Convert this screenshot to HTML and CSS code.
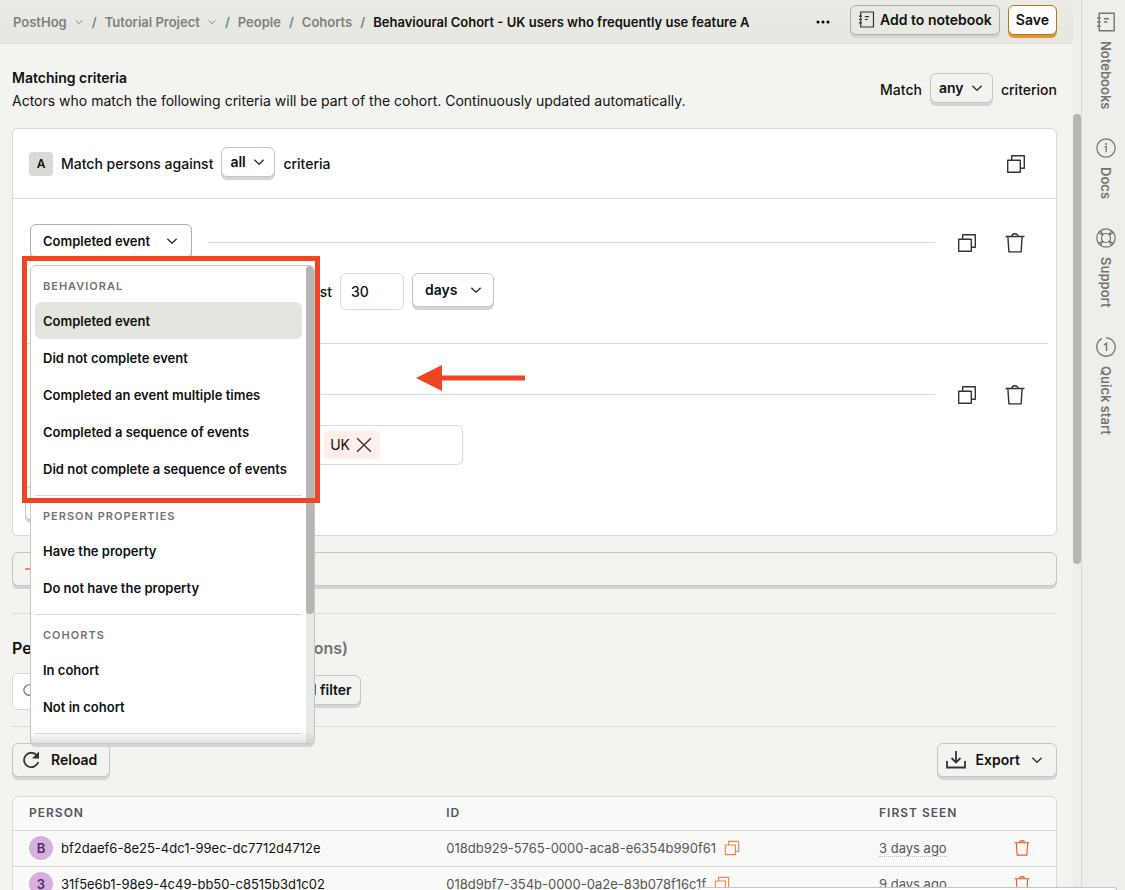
FILE: index.html
```html
<!DOCTYPE html>
<html lang="en">
<head>
<meta charset="utf-8">
<title>Behavioural Cohort</title>
<link rel="stylesheet" href="styles.css">
</head>
<body>
<svg class="sprite" aria-hidden="true">
  <symbol id="chev" viewBox="0 0 12 12"><path d="M2 4l4 4 4-4" fill="none" stroke="currentColor" stroke-width="1.2"/></symbol>
  <symbol id="copy" viewBox="0 0 20 20"><path d="M1.7 6.2h12.6v12.1H1.7zM5.7 6V1.7h12.6v12.6h-3.8" fill="none" stroke="currentColor" stroke-width="1.4" stroke-linejoin="round"/></symbol>
  <symbol id="trash" viewBox="0 0 20 20"><path d="M0.5 3.5h19M2.9 3.7l1 15.2h12.2l1-15.2M6.7 3.3c.3-1.5 1.5-2.5 3.3-2.5s3 1 3.3 2.5" fill="none" stroke="currentColor" stroke-width="1.4" stroke-linejoin="round"/></symbol>
  <symbol id="notebook" viewBox="0 0 20 20"><path d="M3.2 1.2h15v17.6h-15zM1 6h3.6M1 10h3.6M1 14h3.6M8 6.7h5M8 10h3.5" fill="none" stroke="currentColor" stroke-width="1.4" stroke-linejoin="round"/></symbol>
</svg>
<div class="app">
  <div class="scene">
    <header class="topbar">
      <nav class="crumbs" aria-label="Breadcrumb">
        <a href="#" class="crumb">PostHog <svg class="chev-s"><use href="#chev"/></svg></a><span class="slash">/</span>
        <a href="#" class="crumb">Tutorial Project <svg class="chev-s"><use href="#chev"/></svg></a><span class="slash">/</span>
        <a href="#" class="crumb">People</a><span class="slash">/</span>
        <a href="#" class="crumb">Cohorts</a><span class="slash">/</span>
        <span class="crumb current">Behavioural Cohort - UK users who frequently use feature A</span>
      </nav>
      <div class="actions">
        <button class="icon-btn" aria-label="More"><svg class="dots" viewBox="0 0 14 4"><circle cx="2" cy="2" r="1.5"/><circle cx="7" cy="2" r="1.5"/><circle cx="12" cy="2" r="1.5"/></svg></button>
        <button class="btn small notebook"><svg class="ico-m"><use href="#notebook"/></svg>Add to notebook</button>
        <button class="btn small save">Save</button>
      </div>
    </header>

    <main class="content">
      <section class="intro">
        <div>
          <h2 class="title">Matching criteria</h2>
          <p class="text">Actors who match the following criteria will be part of the cohort. Continuously updated automatically.</p>
        </div>
        <div class="inline">
          <label for="any">Match</label>
          <span class="picker"><select id="any" class="btn small"><option>any</option></select><svg class="chev"><use href="#chev"/></svg></span>
          <span>criterion</span>
        </div>
      </section>

      <section class="card">
        <div class="card-head">
          <span class="badge">A</span>
          <label for="all">Match persons against</label>
          <span class="picker"><select id="all" class="btn small white"><option>all</option></select><svg class="chev"><use href="#chev"/></svg></span>
          <span>criteria</span>
          <button class="icon-btn push" aria-label="Duplicate group"><svg class="ico"><use href="#copy"/></svg></button>
        </div>

        <div class="criterion">
          <div class="crit-row">
            <div class="anchor">
              <button class="btn white open" aria-haspopup="true" aria-expanded="true">Completed event <svg class="chev"><use href="#chev"/></svg></button>
              <div class="menu">
                <div class="menu-list">
                  <h5 class="menu-title">Behavioral</h5>
                  <button class="item selected">Completed event</button>
                  <button class="item">Did not complete event</button>
                  <button class="item">Completed an event multiple times</button>
                  <button class="item">Completed a sequence of events</button>
                  <button class="item">Did not complete a sequence of events</button>
                  <hr class="menu-line">
                  <h5 class="menu-title">Person properties</h5>
                  <button class="item">Have the property</button>
                  <button class="item">Do not have the property</button>
                  <hr class="menu-line">
                  <h5 class="menu-title">Cohorts</h5>
                  <button class="item">In cohort</button>
                  <button class="item">Not in cohort</button>
                  <hr class="menu-line">
                </div>
                <div class="menu-track"><div class="menu-thumb"></div></div>
              </div>
            </div>
            <span class="rule"></span>
            <button class="icon-btn" aria-label="Duplicate"><svg class="ico"><use href="#copy"/></svg></button>
            <button class="icon-btn" aria-label="Delete"><svg class="ico"><use href="#trash"/></svg></button>
          </div>
          <div class="fields">
            <label class="lead" for="num">in the last</label>
            <input id="num" class="num" type="text" value="30">
            <span class="picker wide"><select class="btn white" aria-label="Interval"><option>days</option></select><svg class="chev"><use href="#chev"/></svg></span>
          </div>
        </div>

        <div class="criterion second">
          <div class="crit-row">
            <span class="rule"></span>
            <button class="icon-btn" aria-label="Duplicate"><svg class="ico"><use href="#copy"/></svg></button>
            <button class="icon-btn" aria-label="Delete"><svg class="ico"><use href="#trash"/></svg></button>
          </div>
          <div class="fields">
            <div class="tags"><span class="tag">UK <button class="icon-btn" aria-label="Remove UK"><svg class="cross" viewBox="0 0 14 14"><path d="M1 1l12 12M13 1L1 13" fill="none" stroke="currentColor" stroke-width="1.2"/></svg></button></span></div>
          </div>
        </div>
        <button class="btn white add-crit" aria-label="Add criteria"></button>
      </section>

      <button class="btn add-group" aria-label="Add criteria group"><svg class="plus" viewBox="0 0 14 14"><path d="M0 7h14M7 0v14" fill="none" stroke="currentColor" stroke-width="1.8"/></svg></button>

      <hr class="line">
      <h3 class="persons"><span>Persons</span><span class="muted">(2 persons)</span></h3>
      <div class="filters">
        <div class="search"><svg class="ico-m" viewBox="0 0 18 18"><path d="M12.5 12.5L17 17M13 7.5a5.5 5.5 0 1 1-11 0 5.500 5.500 0 0 1 11 0" fill="none" stroke="currentColor" stroke-width="1.4"/></svg><input type="search" aria-label="Search persons"></div>
        <button class="btn small filter">Add filter</button>
      </div>
      <hr class="line">
      <div class="tools">
        <button class="btn"><svg class="ico-l" viewBox="0 0 20 20"><path d="M16.3 6A7.2 7.2 0 1 0 17.2 12" fill="none" stroke="currentColor" stroke-width="1.8"/><path d="M18 1.5v7h-7z" fill="currentColor"/></svg>Reload</button>
        <button class="btn export"><svg class="ico-l" viewBox="0 0 20 20"><path d="M1 11v6.500h18V11M10 1v11M5.500 8L10 12.500 14.500 8" fill="none" stroke="currentColor" stroke-width="1.8"/></svg>Export <svg class="chev"><use href="#chev"/></svg></button>
      </div>

      <div class="table-box">
        <table class="table">
          <colgroup><col class="c-person"><col><col class="c-seen"><col class="c-del"></colgroup>
          <thead><tr><th>Person</th><th>ID</th><th>First seen</th><th></th></tr></thead>
          <tbody>
            <tr>
              <td><a href="#" class="person"><span class="avatar">B</span>bf2daef6-8e25-4dc1-99ec-dc7712d4712e</a></td>
              <td><span class="id">018db929-5765-0000-aca8-e6354b990f61 <button class="icon-btn orange" aria-label="Copy"><svg class="ico-s"><use href="#copy"/></svg></button></span></td>
              <td><span class="ago">3 days ago</span></td>
              <td><button class="icon-btn orange strong" aria-label="Delete"><svg class="ico-s"><use href="#trash"/></svg></button></td>
            </tr>
            <tr>
              <td><a href="#" class="person"><span class="avatar">3</span>31f5e6b1-98e9-4c49-bb50-c8515b3d1c02</a></td>
              <td><span class="id">018d9bf7-354b-0000-0a2e-83b078f16c1f <button class="icon-btn orange" aria-label="Copy"><svg class="ico-s"><use href="#copy"/></svg></button></span></td>
              <td><span class="ago">9 days ago</span></td>
              <td><button class="icon-btn orange strong" aria-label="Delete"><svg class="ico-s"><use href="#trash"/></svg></button></td>
            </tr>
          </tbody>
        </table>
      </div>
    </main>
  </div>

  <div class="track"><div class="thumb"></div></div>

  <aside class="side">
    <button class="tab"><svg class="ico-l"><use href="#notebook"/></svg><span class="vert">Notebooks</span></button>
    <button class="tab"><svg class="ico-l" viewBox="0 0 20 20"><circle cx="10" cy="10" r="9.2" fill="none" stroke="currentColor" stroke-width="1.2"/><path d="M8.500 8.700h1.700v5.600" fill="none" stroke="currentColor" stroke-width="1.3"/><circle cx="10" cy="6" r="1" fill="currentColor"/></svg><span class="vert">Docs</span></button>
    <button class="tab"><svg class="ico-l" viewBox="0 0 20 20"><g fill="none" stroke="currentColor" stroke-width="1.2"><circle cx="10" cy="10" r="9.2"/><circle cx="10" cy="10" r="4.5"/><path d="M2.800 4.300l4 3.200M4.300 2.800l3.200 4M17.200 4.300l-4 3.200M15.700 2.800l-3.200 4M2.800 15.700l4-3.200M4.300 17.200l3.200-4M17.200 15.700l-4-3.200M15.700 17.200l-3.200-4"/></g></svg><span class="vert">Support</span></button>
    <button class="tab"><svg class="ico-l" viewBox="0 0 20 20"><path d="M10 .8A9.200 9.200 0 1 1 6 1.700" fill="none" stroke="currentColor" stroke-width="1.3"/><path d="M8 8l2.500-1.700V14" fill="none" stroke="currentColor" stroke-width="1.4"/></svg><span class="vert">Quick start</span></button>
  </aside>

  <div class="frame"></div>
  <svg class="arrow" viewBox="0 0 110 26"><path d="M0 13L26 0v10.500h83v5H26V26z" fill="#f04423"/></svg>
  <div class="sheet"></div>
</div>
</body>
</html>
```
FILE: styles.css
```css
* { box-sizing: border-box; }
body { margin: 0; font-family: Inter, "Liberation Sans", sans-serif; font-size: 14px; line-height: 20px; color: #111; background: #f3f4ef; }
h2, h3, h5, p, hr { margin: 0; }
hr { border: 0; }
a { color: inherit; text-decoration: none; }
button, input, select { font: inherit; color: inherit; margin: 0; }
svg { display: block; flex: none; }
.sprite { position: absolute; width: 0; height: 0; }

.app { position: relative; display: flex; height: 100vh; overflow: hidden; }
.scene { flex: 1; min-width: 0; }

.ico { width: 20px; height: 20px; }
.ico-l { width: 20px; height: 20px; }
.ico-m { width: 17px; height: 17px; }
.ico-s { width: 16px; height: 16px; }
.chev { width: 14px; height: 14px; }
.chev-s { width: 10px; height: 10px; }
.dots { width: 14px; height: 4px; }
.cross { width: 16px; height: 16px; }
.icon-btn { border: 0; background: none; padding: 0; color: #333; display: flex; }

.btn { appearance: none; display: flex; align-items: center; height: 34px; padding: 0 12px; gap: 10px; border: 1px solid #c5c5c5; border-radius: 6px; background: #f3f4ef; box-shadow: 0 3px 0 #d6d3d4; font-size: 14px; font-weight: 600; }
.btn svg { color: #333; }
.btn .plus { width: 16px; height: 16px; color: #f0854f; }
.btn.small { height: 30px; padding: 0 8px; }
.btn.white { background: #fff; }

.topbar { display: flex; align-items: center; justify-content: space-between; height: 44px; padding: 0 16px 0 13px; background: linear-gradient(#eaebe6, #e5e7e0); border-bottom: 1px solid #dedfd9; }
.crumbs { display: flex; align-items: center; gap: 8px; font-size: 13px; font-weight: 600; color: #7f807b; }
.crumb { display: flex; align-items: center; gap: 7px; white-space: nowrap; }
.crumb.current { color: #111; }
.actions { display: flex; align-items: center; gap: 8px; padding-bottom: 4px; }
.actions > .icon-btn { margin: 4px 12px 0 0; }
.topbar .btn { white-space: nowrap; gap: 6px; }
.topbar .notebook { padding: 0 7px; gap: 5px; background: #e8e9e3; border-color: #aeaeaa; }
.topbar .save { padding: 0 7px; background: #fff; border-color: #b17816; box-shadow: 0 3px 0 #dc9a35; }

.content { padding: 24px 16px 0 12px; }
.intro { display: flex; justify-content: space-between; align-items: center; padding-bottom: 17px; }
.title { font-size: 14px; font-weight: 600; line-height: 20px; margin-bottom: 3px; }
.inline { display: flex; align-items: center; gap: 8px; font-weight: 500; }
.picker { display: grid; align-items: center; padding-bottom: 3px; }
.picker > * { grid-area: 1 / 1; }
.picker .btn { padding-right: 28px; }
.picker.wide .btn { padding-right: 35px; }
.picker > svg { justify-self: end; margin-right: 9px; pointer-events: none; color: #333; }
.picker.wide > svg { margin-right: 11px; }

.card { display: flex; flex-direction: column; align-items: flex-start; border: 1px solid #d9dad3; border-radius: 6px; background: #fff; padding-bottom: 15px; }
.card > div { align-self: stretch; }
.card-head { display: flex; align-items: center; gap: 8px; height: 70px; padding: 0 30px 0 16px; border-bottom: 1px solid #d9dad3; font-weight: 500; }
.badge { width: 24px; height: 24px; border-radius: 4px; background: #d9dad3; font-size: 12px; font-weight: 600; line-height: 24px; text-align: center; }
.push { margin-left: auto; }
.criterion { margin: 0 8px; padding: 25px 23px 0 9px; height: 145px; border-bottom: 1px solid #d9dad3; }
.criterion.second { height: 142px; border-bottom: 0; padding-top: 32px; }
.crit-row { display: flex; align-items: center; height: 37px; }
.anchor { position: relative; padding-bottom: 3px; }
.anchor > .btn { border-color: #aeaeaa; white-space: nowrap; font-size: 13px; gap: 15px; }
.rule { flex: 1; height: 1px; background: #d9dad3; margin: 0 22px 0 16px; }
.crit-row > .icon-btn + .icon-btn { margin-left: 28px; }
.fields { display: flex; align-items: center; gap: 8px; margin-top: 12px; font-weight: 500; }
.lead { width: 302px; text-align: right; }
.num { width: 64px; height: 37px; padding: 0 10px; border: 1px solid #d9dad3; border-radius: 6px; background: #fff; }
.tags { width: 433px; height: 40px; padding: 5px 82px; border: 1px solid #d9dad3; border-radius: 6px; display: flex; justify-content: flex-end; }
.tag { display: flex; align-items: center; gap: 6px; height: 28px; padding: 0 8px 0 6px; border-radius: 4px; background: #fdeeea; font-weight: 400; }
.add-crit { width: 120px; margin-left: 12px; }

.add-group { width: 100%; margin: 16px 0 27px; }
.line { height: 1px; background: #d9dad3; }
.persons { display: flex; justify-content: space-between; width: 336px; margin: 22px 0 13px; font-size: 16px; font-weight: 600; line-height: 24px; }
.muted { color: #73736f; }
.filters { display: flex; align-items: center; gap: 8px; padding-bottom: 16px; }
.filter { margin-bottom: 3px; }
.search { display: flex; align-items: center; width: 260px; height: 37px; padding: 0 9px; border: 1px solid #d9dad3; border-radius: 6px; background: #fff; color: #777; }
.search input { flex: 1; min-width: 0; border: 0; outline: 0; background: none; }
.tools { display: flex; justify-content: space-between; padding: 16px 0 19px; }
.tools .btn { padding: 0 12px 0 8px; }

.table-box { border: 1px solid #d9dad3; border-radius: 6px 6px 0 0; background: #f9faf7; }
.table { width: 100%; table-layout: fixed; border-collapse: collapse; }
.c-person { width: 40%; }
.c-seen { width: 135px; }
.c-del { width: 58px; }
.table th { height: 33px; padding: 0 16px; text-align: left; font-size: 12px; font-weight: 600; letter-spacing: 1px; text-transform: uppercase; color: #555; border-bottom: 1px solid #d9dad3; }
.table td { height: 36px; padding: 0 16px; font-size: 13px; border-bottom: 1px solid #d9dad3; white-space: nowrap; }
.person { display: flex; align-items: center; gap: 8px; }
.avatar { width: 24px; height: 24px; border-radius: 50%; background: #d6b1e0; color: #57286b; font-weight: 600; line-height: 24px; text-align: center; }
.id { display: flex; align-items: center; gap: 8px; color: #555; }
.ago { color: #555; border-bottom: 1px dotted #bbb; }
.icon-btn.orange { color: #f0854f; }
.icon-btn.strong { color: #eb5a28; }

.track { width: 8px; background: #eeefea; padding-top: 114px; }
.thumb { height: 450px; border-radius: 4px; background: #b5b6b1; }
.side { width: 44px; flex: none; display: flex; flex-direction: column; align-items: center; gap: 29px; padding: 12px 0 0 5px; border-left: 1px solid #d9dad3; background: #eeefea; }
.tab { display: flex; flex-direction: column; align-items: center; gap: 9px; padding: 0; border: 0; background: none; color: #73736f; font-size: 13px; font-weight: 600; }
.vert { writing-mode: vertical-rl; }

.menu { position: absolute; top: 41px; left: 0; z-index: 2; display: flex; width: 285px; height: 479px; border: 1px solid #c5c5c5; border-radius: 6px; background: #fff; box-shadow: 0 3px 0 #d2d3cc; overflow: hidden; }
.menu-list { flex: 1; min-width: 0; padding: 4px; background: linear-gradient(transparent 465px, #e2e2e2 477px); }
.menu-title { height: 32px; padding: 0 8px; font-size: 11px; line-height: 32px; font-weight: 600; letter-spacing: 1px; text-transform: uppercase; color: #73736f; }
.item { display: block; width: 100%; height: 37px; padding: 0 8px; border: 0; border-radius: 6px; background: none; text-align: left; font-size: 13px; font-weight: 600; white-space: nowrap; }
.item.selected { background: #e4e5df; }
.menu-line { height: 1px; margin: 8px 0 4px; background: #d9dad3; }
.menu-track { width: 8px; background: linear-gradient(#e8e9e4 465px, #d4d5d0 477px); }
.menu-thumb { height: 348px; border-radius: 4px; background: #b5b6b1; }

.frame { position: absolute; z-index: 3; left: 22px; top: 256px; width: 298px; height: 247px; border: 5px solid #f04423; pointer-events: none; }
.arrow { position: absolute; z-index: 3; left: 416px; top: 365px; width: 110px; height: 26px; }
.sheet { position: absolute; z-index: 3; left: 698px; right: 8px; bottom: 0; height: 3px; border: 1px solid #c5c5c5; border-bottom: 0; border-radius: 6px 6px 0 0; background: #fff; }
```
